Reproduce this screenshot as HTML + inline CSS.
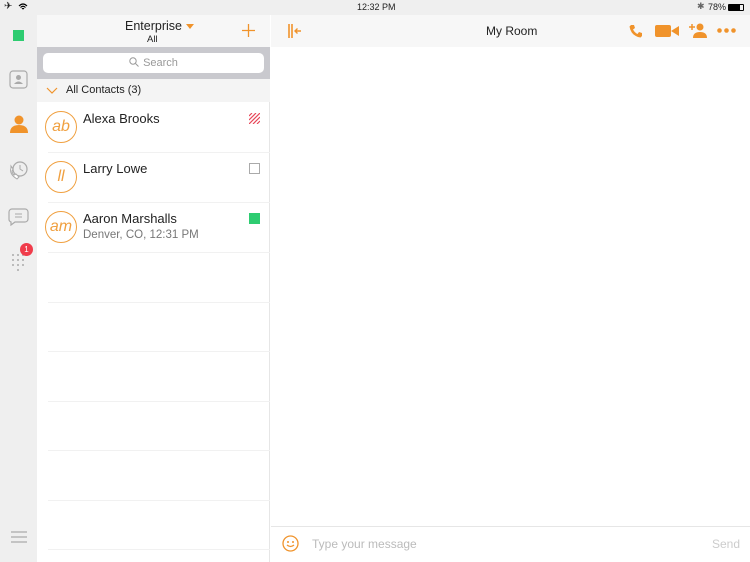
<!DOCTYPE html>
<html><head><meta charset="utf-8"><style>
*{margin:0;padding:0;box-sizing:border-box}
body{width:750px;height:562px;overflow:hidden;background:#fff;font-family:"Liberation Sans",sans-serif;position:relative;color:#222}
.abs{position:absolute}
.status{left:0;top:0;width:750px;height:15px;background:#efefef;font-size:9px}
.rail{left:0;top:15px;width:37px;height:547px;background:#efefef}
.list{left:37px;top:15px;width:233px;height:547px;background:#fff;border-right:1px solid #e6e6e6}
.hdr{left:37px;top:15px;width:233px;height:32px;background:#f7f7f7}
.srch{left:37px;top:47px;width:233px;height:32px;background:#c9c9ce}
.sfield{left:43px;top:53px;width:221px;height:20px;background:#fff;border-radius:5px;color:#999;font-size:11px;text-align:center;line-height:20px}
.sect{left:37px;top:79px;width:233px;height:23px;background:#f4f4f4;font-size:11px;line-height:23px}
.row{left:37px;width:233px;height:50px}
.sep{left:48px;width:222px;height:1px;background:#f1f1f1}
.av{left:8px;top:9px;width:32px;height:32px;border:1px solid #f0a040;border-radius:50%;color:#f0a040;font-style:italic;font-size:16px;text-align:center;line-height:30px}
.nm{left:46px;top:9px;font-size:13px}
.sub{left:46px;top:27px;font-size:11.5px;color:#777}
.rhdr{left:271px;top:15px;width:479px;height:32px;background:#f7f7f7}
</style></head><body>
<div class="abs status">
 <span class="abs" style="left:4px;top:1px;font-size:10px">✈</span>
 <svg class="abs" style="left:18px;top:3px" width="10" height="8" viewBox="0 0 10 8"><path d="M1 3Q5 -1 9 3M2.5 4.5Q5 2 7.5 4.5M4 6Q5 5 6 6" stroke="#000" fill="none" stroke-width="1.2"/></svg>
 <span class="abs" style="left:357px;top:2px">12:32 PM</span>
 <span class="abs" style="left:697px;top:1px;color:#666">✱</span>
 <span class="abs" style="left:708px;top:2px">78%</span>
 <div class="abs" style="left:728px;top:4px;width:16px;height:7px;border:1px solid #000;border-radius:1px"><div style="width:11px;height:5px;background:#000"></div></div>
</div>
<div class="abs rail">
 <div class="abs" style="left:13px;top:15px;width:11px;height:11px;background:#2ecc71"></div>
 <svg class="abs" style="left:9px;top:54px" width="19" height="20" viewBox="0 0 19 20"><rect x="1" y="2" width="17" height="17" rx="3" fill="none" stroke="#aaa" stroke-width="1.2"/><circle cx="9.5" cy="8.5" r="2.5" fill="#aaa"/><path d="M5 15q4.5-5 9 0z" fill="#aaa"/></svg>
 <svg class="abs" style="left:9px;top:99px" width="20" height="20" viewBox="0 0 20 20"><circle cx="10" cy="6" r="4.5" fill="#f0932b"/><path d="M1 19q0-8 9-8t9 8z" fill="#f0932b"/></svg>
 <svg class="abs" style="left:8px;top:145px" width="21" height="21" viewBox="0 0 21 21"><circle cx="12" cy="9" r="7" fill="none" stroke="#aaa" stroke-width="1.2"/><path d="M12 5v4l3 2" stroke="#aaa" fill="none"/><path d="M3 8q-2 6 6 11l2-2-3-3-2 1q-2-2-2-4l1-2-2-3z" fill="#fff" stroke="#aaa"/></svg>
 <svg class="abs" style="left:8px;top:192px" width="21" height="19" viewBox="0 0 21 19"><path d="M4 2h13a3 3 0 0 1 3 3v7a3 3 0 0 1-3 3H7l-4 3v-3a3 3 0 0 1-2-3V5a3 3 0 0 1 3-3z" fill="none" stroke="#aaa" stroke-width="1.2"/><path d="M7 7h7M7 10h7" stroke="#aaa"/></svg>
 <svg class="abs" style="left:11px;top:238px" width="14" height="18" viewBox="0 0 14 18"><g fill="#aaa"><circle cx="2" cy="2" r="1"/><circle cx="7" cy="2" r="1"/><circle cx="12" cy="2" r="1"/><circle cx="2" cy="7" r="1"/><circle cx="7" cy="7" r="1"/><circle cx="12" cy="7" r="1"/><circle cx="2" cy="12" r="1"/><circle cx="7" cy="12" r="1"/><circle cx="12" cy="12" r="1"/><circle cx="7" cy="17" r="1"/></g></svg>
 <div class="abs" style="left:20px;top:228px;width:13px;height:13px;border-radius:50%;background:#f03c4b;color:#fff;font-size:8px;text-align:center;line-height:13px">1</div>
 <svg class="abs" style="left:11px;top:516px" width="16" height="12" viewBox="0 0 16 12"><path d="M0 1h16M0 6h16M0 11h16" stroke="#999" stroke-width="1"/></svg>
</div>
<div class="abs list"></div>
<div class="abs hdr">
 <div class="abs" style="left:88px;top:4px;font-size:12.5px">Enterprise</div>
 <div class="abs" style="left:149px;top:9px;width:0;height:0;border-left:4px solid transparent;border-right:4px solid transparent;border-top:5px solid #f0932b"></div>
 <div class="abs" style="left:110px;top:19px;font-size:9.5px">All</div>
 <svg class="abs" style="left:205px;top:9px" width="13" height="13" viewBox="0 0 13 13"><path d="M6.5 0v13M0 6.5h13" stroke="#f0932b" stroke-width="1.3"/></svg>
</div>
<div class="abs srch"></div>
<div class="abs sfield"><svg width="10" height="10" viewBox="0 0 10 10" style="vertical-align:-1px;margin-right:4px"><circle cx="4" cy="4" r="3.2" stroke="#999" fill="none"/><path d="M6.5 6.5l3 3" stroke="#999"/></svg>Search</div>
<div class="abs sect"><svg class="abs" style="left:9px;top:8px" width="12" height="7" viewBox="0 0 12 7"><path d="M1 1l5 5 5-5" stroke="#f0932b" fill="none" stroke-width="1.2"/></svg><span class="abs" style="left:29px">All Contacts (3)</span></div>
<div class="abs row" style="top:102px"><div class="abs av">ab</div><div class="abs nm">Alexa Brooks</div>
 <svg class="abs" style="left:212px;top:11px" width="11" height="11" viewBox="0 0 11 11"><path d="M0 3l3-3M0 7l7-7M0 11l11-11M4 11l7-7M8 11l3-3" stroke="#e8485a" stroke-width="1.2"/></svg></div>
<div class="abs sep" style="top:152px"></div>
<div class="abs row" style="top:152px"><div class="abs av">ll</div><div class="abs nm">Larry Lowe</div>
 <div class="abs" style="left:212px;top:11px;width:11px;height:11px;border:1px solid #aaa"></div></div>
<div class="abs sep" style="top:202px"></div>
<div class="abs row" style="top:202px"><div class="abs av">am</div><div class="abs nm">Aaron Marshalls</div><div class="abs sub">Denver, CO, 12:31 PM</div>
 <div class="abs" style="left:212px;top:11px;width:11px;height:11px;background:#2ecc71"></div></div>
<div class="abs sep" style="top:252px"></div>
<div class="abs sep" style="top:302px"></div>
<div class="abs sep" style="top:351px"></div>
<div class="abs sep" style="top:401px"></div>
<div class="abs sep" style="top:450px"></div>
<div class="abs sep" style="top:500px"></div>
<div class="abs sep" style="top:549px"></div>
<div class="abs rhdr">
 <svg class="abs" style="left:17px;top:9px" width="14" height="14" viewBox="0 0 14 14"><path d="M1 0v14M4 0v14" stroke="#f0932b" stroke-width="1.6"/><path d="M13 7H7M9.5 4.5L7 7l2.5 2.5" stroke="#f0932b" stroke-width="1.4" fill="none"/></svg>
 <div class="abs" style="left:215px;top:9px;font-size:12px">My Room</div>
 <svg class="abs" style="left:358px;top:9px" width="14" height="14" viewBox="0 0 14 14"><path d="M2 1l3 0 1 3-2 1.5q1.5 3 4.5 4.5L10 8l3 1v3l-1.5 1.5Q2 12 0.5 2.5z" fill="#f0932b"/></svg>
 <svg class="abs" style="left:384px;top:10px" width="25" height="12" viewBox="0 0 25 12"><rect x="0" y="0" width="16" height="12" rx="2" fill="#f0932b"/><path d="M16 6l8-5v10z" fill="#f0932b"/></svg>
 <svg class="abs" style="left:418px;top:8px" width="18" height="15" viewBox="0 0 18 15"><path d="M0 4h6M3 1v6" stroke="#f0932b" stroke-width="1.5"/><circle cx="11" cy="4" r="3.5" fill="#f0932b"/><path d="M4 15q0-6 7-6t7 6z" fill="#f0932b"/></svg>
 <svg class="abs" style="left:446px;top:13px" width="19" height="5" viewBox="0 0 19 5"><circle cx="2.5" cy="2.5" r="2.3" fill="#f0932b"/><circle cx="9.5" cy="2.5" r="2.3" fill="#f0932b"/><circle cx="16.5" cy="2.5" r="2.3" fill="#f0932b"/></svg>
</div>
<div class="abs" style="left:271px;top:526px;width:479px;height:1px;background:#e6e6e6"></div>
<svg class="abs" style="left:282px;top:535px" width="17" height="17" viewBox="0 0 17 17"><circle cx="8.5" cy="8.5" r="7.5" fill="none" stroke="#f0932b" stroke-width="1.3"/><circle cx="6" cy="7" r="1" fill="#f0932b"/><circle cx="11" cy="7" r="1" fill="#f0932b"/><path d="M5 10q3.5 3 7 0" stroke="#f0932b" fill="none" stroke-width="1.2"/></svg>
<div class="abs" style="left:312px;top:537px;font-size:12px;color:#bbb">Type your message</div>
<div class="abs" style="left:712px;top:537px;font-size:12px;color:#ccc">Send</div>
</body></html>
